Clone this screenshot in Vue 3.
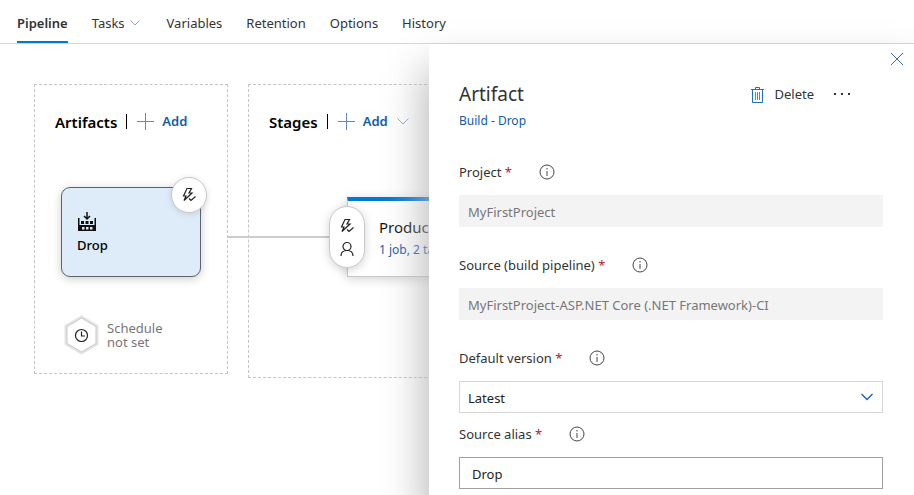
<script setup>
import { ref } from 'vue'

const tabs = [
  { name: 'Pipeline', active: true },
  { name: 'Tasks', menu: true },
  { name: 'Variables' },
  { name: 'Retention' },
  { name: 'Options' },
  { name: 'History' },
]

const fields = [
  { id: 'project', label: 'Project', value: 'MyFirstProject' },
  { id: 'source', label: 'Source (build pipeline)', value: 'MyFirstProject-ASP.NET Core (.NET Framework)-CI' },
]

const version = ref('Latest')
const alias = ref('Drop')
</script>

<template>
  <div class="page">
    <nav class="tabs">
      <a v-for="tab in tabs" :key="tab.name" href="#" class="tab" :class="{ active: tab.active, menu: tab.menu }">
        {{ tab.name }}
        <svg v-if="tab.menu" class="chevron" width="12" height="8" viewBox="0 0 12 8"><path d="M1.500 1.500 6 6l4.500-4.500" /></svg>
      </a>
    </nav>

    <div class="workspace">
      <main class="canvas">
        <section class="lane artifacts">
          <header class="lane-head">
            <h2>Artifacts</h2>
            <button class="add" type="button">
              <svg class="plus" width="17" height="17" viewBox="0 0 17 17"><path d="M8.500 0v17M0 8.500h17" /></svg>
              Add
            </button>
          </header>
          <div class="artifact">
            <svg class="build" width="20" height="21" viewBox="0 0 20 21">
              <path d="M10 1v7M7 5l3 3 3-3" fill="none" stroke="#111" stroke-width="1.500" />
              <path fill="#111" fill-rule="evenodd" d="M1 7h1.500v7h15V7H19v13H1zM5 16v2.500h2.500V16zM9 16v2.500h2.500V16zM13 16v2.500h2.500V16z" />
              <path fill="#111" d="M4 10h3v3H4zM8.500 10h3v3h-3zM13 10h3v3h-3z" />
            </svg>
            <span>Drop</span>
            <button class="trigger" type="button" aria-label="Continuous deployment trigger">
              <svg class="bolt" width="16" height="16" viewBox="0 0 16 16"><path d="M6 1.500h4.500L8 6h3L3 13.500l2-4.500H2.500zM8 11.500l2 2 4.500-4" /></svg>
            </button>
          </div>
          <div class="schedule">
            <svg width="35" height="40" viewBox="0 0 35 40">
              <path d="M17.500 2 33 11v18l-15.500 9L2 29V11z" fill="#fff" stroke="#e4e4e4" stroke-width="3" />
              <path d="M17.500 3 32 11.500v17L17.500 37 3 28.500v-17z" fill="#fff" stroke="#c8c8c8" />
              <circle cx="17.500" cy="20.500" r="6" fill="none" stroke="#222" stroke-width="1.200" />
              <path d="M17.500 16.500v4.500h3.500" fill="none" stroke="#222" stroke-width="1.200" />
            </svg>
            <span>Schedule<br>not set</span>
          </div>
        </section>

        <section class="lane stages">
          <header class="lane-head">
            <h2>Stages</h2>
            <button class="add" type="button">
              <svg class="plus" width="17" height="17" viewBox="0 0 17 17"><path d="M8.500 0v17M0 8.500h17" /></svg>
              Add
              <svg class="chevron" width="14" height="8" viewBox="0 0 14 8"><path d="M1.500 1.500 7 7l5.500-5.500" /></svg>
            </button>
          </header>
          <div class="stage-row">
            <div class="connector"></div>
            <div class="stage">
              <strong>Production</strong>
              <a href="#">1 job, 2 tasks</a>
              <button class="gates" type="button" aria-label="Pre-deployment conditions">
                <svg class="bolt" width="16" height="16" viewBox="0 0 16 16"><path d="M6 1.500h4.500L8 6h3L3 13.500l2-4.500H2.500zM8 11.500l2 2 4.500-4" /></svg>
                <svg class="bolt" width="16" height="16" viewBox="0 0 16 16"><circle cx="8" cy="5.500" r="4" /><path d="M2 15c0-3.500 2.500-5.500 6-5.500s6 2 6 5.500" /></svg>
              </button>
            </div>
          </div>
        </section>
      </main>

      <aside class="panel">
        <button class="close" type="button" aria-label="Close">
          <svg width="14" height="14" viewBox="0 0 14 14"><path d="m1 1 12 12M13 1 1 13" /></svg>
        </button>
        <header class="panel-head">
          <h1>Artifact</h1>
          <div class="actions">
            <button class="delete" type="button">
              <svg width="13" height="17" viewBox="0 0 13 17"><path d="M0 3.500h13M4.500 3V1.500h4V3M1.500 4v12.500h10V4" stroke="#1f6fc4" /><path d="M4.500 6v8M6.500 6v8M8.500 6v8" stroke="#5d86cf" /></svg>
              Delete
            </button>
            <button class="more" type="button" aria-label="More actions">
              <svg width="18" height="4" viewBox="0 0 18 4"><path d="M1 1h2v2H1zM8 1h2v2H8zM15 1h2v2h-2z" /></svg>
            </button>
          </div>
        </header>
        <a class="sub" href="#">Build - Drop</a>

        <form class="form" @submit.prevent>
          <div v-for="field in fields" :key="field.id" class="field spaced">
            <div class="caption">
              <label :for="field.id">{{ field.label }} <i>*</i></label>
              <svg class="info" width="16" height="16" viewBox="0 0 16 16"><circle cx="8" cy="8" r="7" /><path d="M8 7v5M8 4v1.500" /></svg>
            </div>
            <input :id="field.id" type="text" :value="field.value" disabled>
          </div>
          <div class="field">
            <div class="caption">
              <label for="version">Default version <i>*</i></label>
              <svg class="info" width="16" height="16" viewBox="0 0 16 16"><circle cx="8" cy="8" r="7" /><path d="M8 7v5M8 4v1.500" /></svg>
            </div>
            <div class="select">
              <select id="version" v-model="version"><option>Latest</option></select>
              <svg class="arrow" width="14" height="8" viewBox="0 0 14 8"><path d="m1.500 1 5.500 5.500L12.500 1" /></svg>
            </div>
          </div>
          <div class="field">
            <div class="caption">
              <label for="alias">Source alias <i>*</i></label>
              <svg class="info" width="16" height="16" viewBox="0 0 16 16"><circle cx="8" cy="8" r="7" /><path d="M8 7v5M8 4v1.500" /></svg>
            </div>
            <input id="alias" v-model="alias" class="alias" type="text">
          </div>
        </form>
      </aside>
    </div>
  </div>
</template>

<style>
body {
  margin: 0;
  background: #fff;
}
</style>

<style scoped>
* {
  box-sizing: border-box;
}
.page {
  display: flex;
  flex-direction: column;
  min-height: 100vh;
  overflow: hidden;
  color: #333;
  font: 13px/18px "Noto Sans", "Open Sans", sans-serif;
}
svg {
  flex: none;
  display: block;
  fill: none;
}
a {
  text-decoration: none;
}
button {
  padding: 0;
  border: 0;
  background: none;
  color: inherit;
  font: inherit;
  cursor: pointer;
}
h1, h2 {
  margin: 0;
}
.tabs {
  display: flex;
  gap: 24px;
  height: 44px;
  padding: 0 17px;
  border-bottom: 1px solid #d6d6d6;
}
.tab {
  display: flex;
  align-items: center;
  gap: 4px;
  padding-top: 5px;
  border-bottom: 2px solid transparent;
  color: #333;
}
.tab.active {
  border-color: #0078d4;
  font-weight: 600;
}
.tab.menu {
  padding-right: 2px;
}
.chevron {
  stroke: #8ea6c4;
}
.workspace {
  display: flex;
  flex: 1;
}
.canvas {
  display: flex;
  flex: 1;
  align-items: flex-start;
  gap: 20px;
  min-width: 0;
  padding: 40px 0 0 34px;
  overflow: hidden;
}
.lane {
  flex: none;
  padding-top: 21px;
  border: 1px dashed #c4c4c4;
}
.artifacts {
  width: 194px;
  height: 290px;
}
.stages {
  width: 400px;
  height: 294px;
}
.lane-head {
  display: flex;
  align-items: center;
  height: 32px;
  padding-left: 20px;
}
.lane-head h2 {
  color: #000;
  font-size: 15px;
  font-weight: 600;
  line-height: 20px;
}
.add {
  display: flex;
  align-items: center;
  gap: 8px;
  margin-left: 9px;
  padding-bottom: 2px;
  color: #0f5ba7;
  font-weight: 600;
}
.add::before {
  width: 1px;
  height: 15px;
  margin-right: 2px;
  background: #000;
  content: "";
}
.plus {
  stroke: #6488b8;
}
.artifact {
  position: relative;
  display: flex;
  flex-direction: column;
  align-items: flex-start;
  gap: 4px;
  width: 140px;
  height: 90px;
  margin: 49px 0 0 26px;
  padding: 23px 15px;
  border: 1px solid #5f646b;
  border-radius: 9px;
  background: #deebf8;
  box-shadow: 0 2px 10px rgba(0, 0, 0, .2);
  color: #000;
}
.artifact span {
  font-weight: 500;
}
.trigger {
  position: absolute;
  top: -11px;
  right: -7px;
  display: grid;
  place-items: center;
  width: 36px;
  height: 36px;
  border: 1px solid #c8c8c8;
  border-radius: 50%;
  background: #fff;
  box-shadow: 0 1px 6px rgba(0, 0, 0, .12);
}
.bolt {
  stroke: #222;
  stroke-width: 1.2;
}
.schedule {
  display: flex;
  align-items: center;
  gap: 8px;
  margin: 38px 0 0 29px;
  color: #777;
  line-height: 14px;
}
.stage-row {
  display: flex;
  align-items: center;
  margin: 59px 0 0 -21px;
}
.connector {
  width: 119px;
  height: 2px;
  background: #ccc;
}
.stage {
  position: relative;
  display: flex;
  flex: 1;
  flex-direction: column;
  gap: 4px;
  height: 80px;
  margin-right: 40px;
  padding: 16px 0 0 31px;
  border: 1px solid #c8c8c8;
  border-top: 4px solid #0078d4;
  background: #fff;
  box-shadow: 0 2px 10px rgba(0, 0, 0, .18);
}
.stage strong {
  color: #111;
  font-size: 15px;
  font-weight: 400;
  line-height: 20px;
}
.stage a {
  color: #0f5ba7;
  font-size: 12px;
}
.gates {
  position: absolute;
  top: 5px;
  left: -19px;
  display: flex;
  flex-direction: column;
  align-items: center;
  justify-content: center;
  gap: 7px;
  width: 36px;
  height: 62px;
  border: 1px solid #c8c8c8;
  border-radius: 18px;
  background: #fff;
  box-shadow: 0 2px 10px rgba(0, 0, 0, .18);
}
.panel {
  position: relative;
  flex: 0 1 485px;
  padding: 36px 31px 7px 30px;
  background: #fff;
  box-shadow: 0 28px 40px 4px #b6b6b6;
}
.close {
  position: absolute;
  top: 8px;
  right: 10px;
}
.close svg {
  stroke: #3a6cb8;
}
.panel-head {
  display: flex;
  align-items: center;
  justify-content: space-between;
  height: 28px;
}
.panel-head h1 {
  font-size: 19px;
  font-weight: 400;
  line-height: 28px;
}
.actions {
  display: flex;
  align-items: center;
  gap: 19px;
  margin-right: 32px;
}
.delete {
  display: flex;
  align-items: center;
  gap: 10px;
}
.more svg {
  fill: #333;
}
.sub {
  display: block;
  margin-top: 4px;
  color: #0f5ba7;
  font-size: 12px;
}
.form {
  display: flex;
  flex-direction: column;
  gap: 12px;
  margin-top: 33px;
}
.field {
  display: flex;
  flex-direction: column;
  gap: 14px;
}
.spaced {
  margin-bottom: 17px;
}
.caption {
  display: flex;
  align-items: center;
  gap: 27px;
}
.caption i {
  color: #b3202c;
  font-style: normal;
}
.info {
  stroke: #444;
}
input, select {
  width: 100%;
  height: 32px;
  padding: 1px 8px 0;
  border: 1px solid #d6d6d6;
  border-radius: 0;
  background: #fff;
  color: #222;
  font: inherit;
  appearance: none;
}
input:disabled {
  border-color: #f3f3f3;
  background: #f3f3f3;
  color: #777;
}
.alias {
  padding-left: 12px;
  border-color: #a0a0a0;
}
.select {
  display: grid;
  align-items: center;
}
.select > * {
  grid-area: 1 / 1;
}
.arrow {
  margin-right: 9px;
  justify-self: end;
  pointer-events: none;
  stroke: #1c5ea8;
  stroke-width: 1.3;
}
</style>
